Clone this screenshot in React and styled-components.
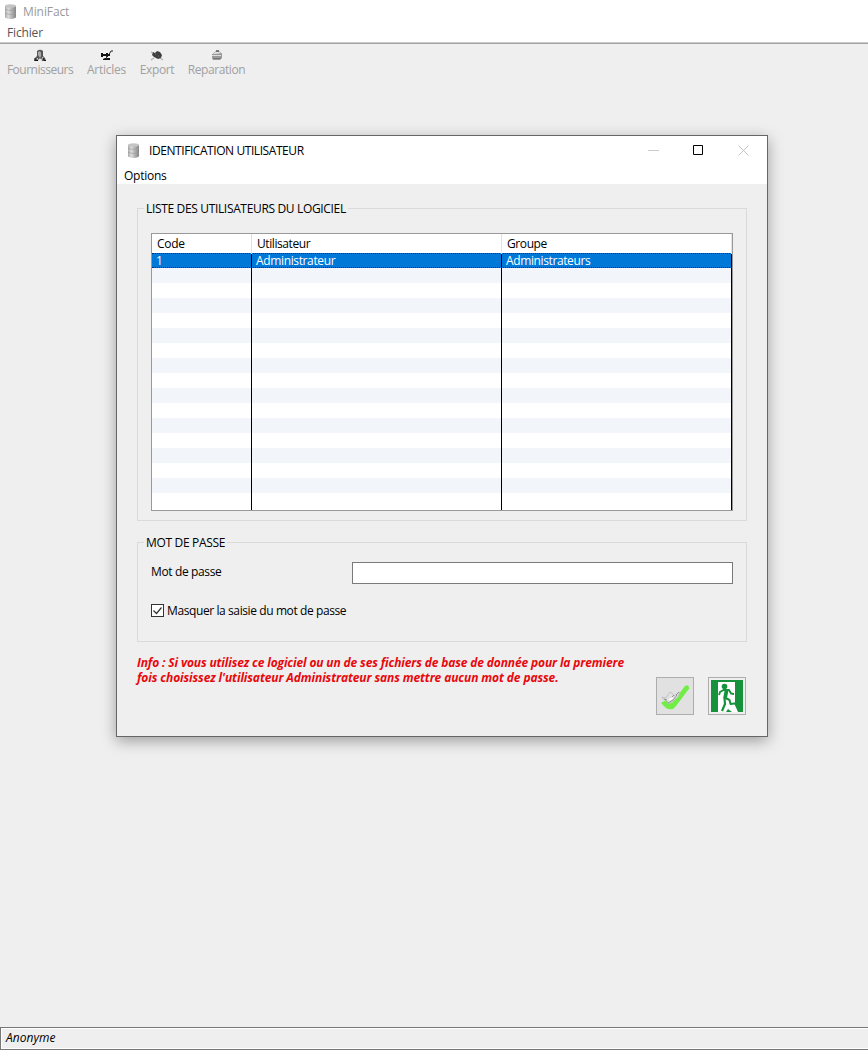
import React from "react";
import styled, { createGlobalStyle } from "styled-components";

const Global = createGlobalStyle`
  *{box-sizing:border-box}
  body{margin:0;background:#efefef;overflow:hidden}
`;

const Desktop = styled.div`
  height: 1050px;
  display: flex;
  flex-direction: column;
  background: #efefef;
  font: 12px/16px "Open Sans", "Noto Sans", sans-serif;
  color: #000;
`;
const Label = styled.span`
  white-space: nowrap;
  letter-spacing: ${(p) => p.$ls || 0}px;
`;
const MainHeader = styled.header`
  height: 44px;
  background: #fff;
  border-bottom: 1px solid #a3a3a3;
  box-shadow: inset 0 -1px #ccc;
`;
const MainTitle = styled.div`
  display: flex;
  align-items: center;
  height: 24px;
  padding-left: 4px;
  gap: 6px;
  color: #999;
`;
const MainMenu = styled.nav`
  padding: 1px 7px;
  color: #555;
`;
const Toolbar = styled.div`
  height: 91px;
  display: flex;
  gap: 14px;
  padding: 5px 7px;
  align-items: flex-start;
`;
const Tool = styled.div`
  width: ${(p) => p.$w}px;
  display: flex;
  flex-direction: column;
  align-items: center;
  color: #a0a0a0;
  svg { display: block; }
`;
const Dialog = styled.section`
  width: 652px;
  height: 602px;
  margin-left: 116px;
  flex: none;
  border: 1px solid #666;
  background: #efefef;
  box-shadow: 0 4px 14px rgba(0, 0, 0, 0.34);
`;
const TitleBar = styled.div`
  height: 29px;
  display: flex;
  align-items: center;
  background: #fff;
  padding: 0 18px 0 10px;
  gap: 9px;
`;
const WindowButtons = styled.div`
  margin-left: auto;
  display: flex;
  gap: 34px;
  svg { display: block; }
`;
const DialogMenu = styled.nav`
  height: 19px;
  background: #fff;
  padding: 3px 7px 0;
`;
const Body = styled.div`
  padding: 17px 20px 0;
`;
const Group = styled.fieldset`
  margin: 0 0 14px;
  padding: 0 13px;
  min-width: 0;
  height: ${(p) => p.$h}px;
  border: 1px solid #dadada;
`;
const Legend = styled.legend`
  height: 15px;
  margin-left: -7px;
  padding: 0 2px;
`;
const Table = styled.div`
  margin-top: 17px;
  height: 278px;
  width: 582px;
  border: 1px solid #999;
  background: #fff;
  overflow: hidden;
`;
const Row = styled.div`
  height: 15px;
  display: grid;
  grid-template-columns: 100px 250px 230px;
  line-height: 15px;
  background: ${(p) => (p.$tint ? "#f2f6fb" : "#fff")};
`;
const LastRow = styled(Row)`height: 18px;`;
const HeadRow = styled(Row)`
  height: 19px;
  line-height: 20px;
`;
const SelectedRow = styled(Row)`
  background: #0078d7;
  color: #fff;
  border-top: 1px dotted #012b4e;
  border-bottom: 1px dotted #012b4e;
  line-height: 13px;
`;
const Cell = styled.div`
  border-right: 1px solid #000;
  padding-left: 4px;
`;
const HeadCell = styled.div`
  border-right: 1px solid #e2e2e2;
  padding-left: 5px;
`;
const PasswordRow = styled.label`
  display: flex;
  align-items: center;
  justify-content: space-between;
  height: 22px;
  margin-top: 12px;
  width: 582px;
  span { padding-bottom: 3px; }
`;
const Field = styled.input`
  width: 381px;
  height: 22px;
  border: 1px solid #7a7a7a;
  background: #fff;
  outline: 0;
  padding: 0 4px;
`;
const CheckRow = styled.div`
  display: flex;
  align-items: flex-start;
  gap: 3px;
  margin-top: 19px;
`;
const CheckBox = styled.span`
  width: 13px;
  height: 13px;
  margin-top: 1px;
  border: 1px solid #333;
  background: #fff;
  svg { display: block; }
`;
const Footer = styled.div`
  display: flex;
  justify-content: space-between;
  margin-top: -1px;
`;
const Info = styled.p`
  margin: 0;
  color: #e8080c;
  font-weight: 700;
  font-style: italic;
  line-height: 15px;
  display: flex;
  flex-direction: column;
`;
const Actions = styled.div`
  display: flex;
  gap: 14px;
  padding: 22px 1px 0 0;
`;
const ImageButton = styled.button`
  width: 38px;
  height: 38px;
  padding: 2px;
  border: 1px solid #adadad;
  background: ${(p) => p.$bg};
  svg { display: block; }
`;
const Status = styled.footer`
  height: 23px;
  margin-top: auto;
  border: 1px solid #777;
  border-right: 0;
  box-shadow: inset 1px 1px #fff, inset 0 -1px #fff;
  padding: 2px 5px;
  font-style: italic;
`;

const Cylinder = () => (
  <svg width="13" height="16" viewBox="0 0 13 16">
    <defs>
      <linearGradient id="metal">
        <stop stopColor="#a9a9a9" /><stop offset=".3" stopColor="#ddd" />
        <stop offset=".6" stopColor="#b5b5b5" /><stop offset="1" stopColor="#858585" />
      </linearGradient>
    </defs>
    <path d="M1 2v11.500q5.500 3 11 0V2z" fill="url(#metal)" />
    <ellipse cx="6.500" cy="2" rx="5.500" ry="1.700" fill="#c4c4c4" />
    <path d="M1 5.500q5.500 2 11 0M1 9.500q5.500 2 11 0" fill="none" stroke="#999" strokeWidth=".6" />
  </svg>
);
const Person = () => (
  <svg width="12" height="13" viewBox="0 0 12 13">
    <path d="M3 2q3-2.500 6 0v5l2 2 1 3H8L6 9l-2 3H0l1-3 2-2z" fill="#555" />
    <path d="M4 3l2-1 1 2v3L6 9 4 6z" fill="#aaa" />
    <path d="M3 9l2 3M9 8l-2 4" stroke="#ddd" />
    <path d="M1 9v2.500h3M9 9l1.500 2.500H12" stroke="#111" fill="none" />
  </svg>
);
const Article = () => (
  <svg width="12" height="13" viewBox="0 0 12 13">
    <path d="M0 4h2v1h3V4h2v1h2v2H7v1H5V7H2v1H0zM2 10l2-1h5v2H2z" fill="#111" />
    <path d="M8 5.500l2-3.500H12" fill="none" stroke="#222" /><path d="M5.500 7v3" stroke="#333" />
  </svg>
);
const Export = () => (
  <svg width="12" height="13" viewBox="0 0 12 13">
    <path d="M2 3l2 1 2-2 3 1 2 3-1 3-3 1-4-2-2-2z" fill="#404040" />
    <path d="M0 3l2 1M0 11l3-2M9 9l3 2" stroke="#999" />
    <path d="M4 5h1M7 7h1" stroke="#777" />
  </svg>
);
const Repair = () => (
  <svg width="12" height="13" viewBox="0 0 12 13">
    <path d="M1 5l10-1v5l-2 2H2L1 9z" fill="#999" />
    <path d="M2 5l3-3h3l2 2" fill="#ddd" stroke="#aaa" strokeWidth=".7" />
    <path d="M5 2h3" stroke="#222" /><path d="M1 6.500h9" stroke="#ddd" /><path d="M2 9.500h8" stroke="#777" />
  </svg>
);
const Validate = () => (
  <svg width="32" height="32" viewBox="0 0 32 32">
    <path d="M2 23l5-3 6 3L26 6q3-2 4 1 1 2-1 3L17 26l-3 3q-4 1-7-1z" fill="#70ee43" />
    <path d="M3 17l4 1 4-6 2 1 2 3 6-4-2 5-5 4-4 3-3-4-3-1z" fill="#e2e2e2" stroke="#bbb" strokeWidth=".8" />
    <path d="M9 23l5-3 4-5M5 19l3 1M13 17l2-2M17 15l3-3" fill="none" stroke="#888" strokeWidth=".9" />
    <path d="M10 20l4-2" stroke="#fff" strokeWidth="1.500" />
  </svg>
);
const Exit = () => (
  <svg width="32" height="32" viewBox="0 0 32 32">
    <path fill="#15923b" d="M0 0h32v32H0z" />
    <path fill="#fff" d="M7 2h17v21h-1l4 9H7z" />
    <circle cx="13.500" cy="6.500" r="2.800" fill="#15923b" />
    <g fill="none" stroke="#15923b" strokeLinejoin="round">
      <path d="M8 15l1-3 3.500-2H18l2 3.500 3 .5" strokeWidth="1.900" />
      <path d="M15.500 10.500l-1.500 8" strokeWidth="3.800" />
      <path d="M14.500 18l4 2 1 4 8-1" strokeWidth="2" />
      <path d="M13.500 18l.5 6-3 7" strokeWidth="2.200" />
    </g>
    <path d="M15 32l2-3 4 3z" fill="#15923b" />
  </svg>
);

const tools = [
  ["Fournisseurs", Person, 66, -0.5],
  ["Articles", Article, 39, -0.25],
  ["Export", Export, 34, -0.35],
  ["Reparation", Repair, 57, -0.42],
];

export default function App() {
  return (
    <Desktop>
      <Global />
      <MainHeader>
        <MainTitle><Cylinder /><Label $ls={-0.1}>MiniFact</Label></MainTitle>
        <MainMenu><Label $ls={-0.15}>Fichier</Label></MainMenu>
      </MainHeader>
      <Toolbar>
        {tools.map(([name, Icon, w, ls]) => (
          <Tool key={name} $w={w}><Icon /><Label $ls={ls}>{name}</Label></Tool>
        ))}
      </Toolbar>
      <Dialog>
        <TitleBar>
          <Cylinder />
          <Label $ls={-0.43}>IDENTIFICATION UTILISATEUR</Label>
          <WindowButtons>
            <svg width="11" height="11"><path d="M0 5.500h11" stroke="#ccc" /></svg>
            <svg width="11" height="11"><path d="M.5.500h9v9h-9z" fill="none" stroke="#000" /></svg>
            <svg width="11" height="11"><path d="M.5.500l10 10M10.500.500l-10 10" stroke="#c4c4c4" /></svg>
          </WindowButtons>
        </TitleBar>
        <DialogMenu><Label $ls={-0.25}>Options</Label></DialogMenu>
        <Body>
          <Group $h={320}>
            <Legend><Label $ls={-0.34}>LISTE DES UTILISATEURS DU LOGICIEL</Label></Legend>
            <Table>
              <HeadRow>
                <HeadCell><Label $ls={-0.25}>Code</Label></HeadCell>
                <HeadCell><Label $ls={-0.42}>Utilisateur</Label></HeadCell>
                <HeadCell><Label $ls={-0.4}>Groupe</Label></HeadCell>
              </HeadRow>
              <SelectedRow>
                <Cell>1</Cell>
                <Cell><Label $ls={-0.36}>Administrateur</Label></Cell>
                <Cell><Label $ls={-0.38}>Administrateurs</Label></Cell>
              </SelectedRow>
              {Array.from({ length: 15 }, (_, i) => (
                <Row key={i} $tint={i % 2 === 0}><Cell /><Cell /><Cell /></Row>
              ))}
              <LastRow><Cell /><Cell /><Cell /></LastRow>
            </Table>
          </Group>
          <Group $h={107}>
            <Legend><Label $ls={-0.33}>MOT DE PASSE</Label></Legend>
            <PasswordRow><Label $ls={-0.37}>Mot de passe</Label><Field type="password" /></PasswordRow>
            <CheckRow>
              <CheckBox>
                <svg width="11" height="11"><path d="M1.500 5.500l3 3 5-6" fill="none" stroke="#333" strokeWidth="1.200" /></svg>
              </CheckBox>
              <Label $ls={-0.4}>Masquer la saisie du mot de passe</Label>
            </CheckRow>
          </Group>
          <Footer>
            <Info>
              <Label $ls={-0.135}>Info : Si vous utilisez ce logiciel ou un de ses fichiers de base de donnée pour la premiere</Label>
              <Label $ls={-0.11}>fois choisissez l'utilisateur Administrateur sans mettre aucun mot de passe.</Label>
            </Info>
            <Actions>
              <ImageButton $bg="#e1e1e1" aria-label="Valider"><Validate /></ImageButton>
              <ImageButton $bg="#efefef" aria-label="Quitter"><Exit /></ImageButton>
            </Actions>
          </Footer>
        </Body>
      </Dialog>
      <Status><Label $ls={0.05}>Anonyme</Label></Status>
    </Desktop>
  );
}
